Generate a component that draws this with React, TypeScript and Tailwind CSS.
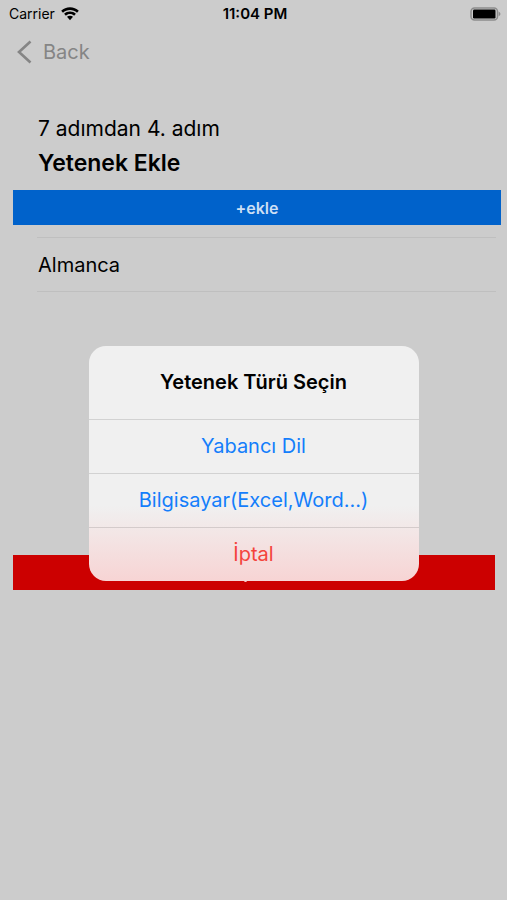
import React from 'react';

const options = [
  { label: 'Yabancı Dil', color: 'text-[#147efb]' },
  { label: 'Bilgisayar(Excel,Word...)', color: 'text-[#147efb]' },
  { label: 'İptal', color: 'text-[#f4443c]' },
];

const skills = ['Almanca'];

const StatusBar: React.FC = () => (
  <header className="grid grid-cols-3 items-center h-7 pl-[9px] pr-[6px]">
    <div className="flex items-center gap-[6px] text-sm">
      <span>Carrier</span>
      <svg className="w-[18px] h-[14px]" viewBox="0 0 18 14" aria-hidden="true">
        <path d="M9 0.2C5.6 0.2 2.500 1.500 0.200 3.700L2 5.700C3.900 3.900 6.300 2.900 9 2.900S14.100 3.900 16 5.700L17.800 3.700C15.500 1.500 12.400 0.200 9 0.200Z" />
        <path d="M9 4.400C6.800 4.400 4.700 5.200 3.100 6.700L4.900 8.700C6 7.700 7.400 7.100 9 7.100S12 7.700 13.100 8.700L14.900 6.700C13.300 5.200 11.200 4.400 9 4.400Z" />
        <path d="M9 8.700C7.800 8.700 6.800 9.100 6 9.800L9 13.200L12 9.800C11.200 9.100 10.200 8.700 9 8.700Z" />
      </svg>
    </div>
    <span className="text-center text-[15px] font-semibold">11:04 PM</span>
    <svg className="justify-self-end w-[31px] h-[14px]" viewBox="0 0 31 14" aria-hidden="true">
      <rect x="1" y="1" width="26.500" height="12" rx="3.500" fill="none" stroke="#8c8c8c" strokeWidth="1.500" />
      <rect x="3" y="2.600" width="22.500" height="8.800" rx="1.200" />
      <path d="M28.600 4.800C29.800 5.200 30.400 6 30.400 7S29.800 8.800 28.600 9.200Z" fill="#8c8c8c" />
    </svg>
  </header>
);

const App: React.FC = () => {
  return (
    <div className="relative min-h-screen bg-[#cccccc] text-black font-['Inter',sans-serif]">
      <StatusBar />

      <nav className="pl-4 pt-1">
        <button className="flex items-center gap-[11px] h-10 text-xl text-[#858585]">
          <svg className="w-4 h-6" viewBox="0 0 16 24" fill="none" stroke="currentColor" strokeWidth="2.600" aria-hidden="true">
            <path d="M14.500 1.500L3 12L14.500 22.500" />
          </svg>
          Back
        </button>
      </nav>

      <main className="pl-[13px] pt-11">
        <div className="pl-[25px]">
          <p className="text-[21px] leading-[26px]">7 adımdan 4. adım</p>
          <h1 className="pt-[5px] text-[23px] leading-8 font-semibold">Yetenek Ekle</h1>
        </div>

        <div className="pt-[11px] pr-[6px]">
          <button className="w-full h-[35px] bg-[#0062cb] text-base font-semibold text-[#ccdff4]">+ekle</button>
        </div>

        <ul className="mt-3 ml-6 mr-[11px] border-t border-[#bfbfbf]">
          {skills.map((skill) => (
            <li key={skill} className="flex items-center h-[54px] pl-px border-b border-[#bfbfbf] text-xl">
              {skill}
            </li>
          ))}
        </ul>

        <div className="pt-[263px] pr-3">
          <button aria-label="Kaydet" className="flex items-end justify-center w-full h-[35px] pb-2 pr-[18px] bg-[#cc0000]">
            <span className="size-[3px] rounded-full bg-[#f4cccc]" />
          </button>
        </div>
      </main>

      {/* Skill type dialog */}
      <div className="absolute inset-0 flex items-center justify-center pt-[26px]">
        <div
          role="dialog"
          aria-labelledby="skill-type-title"
          className="w-[330px] rounded-[17px] overflow-hidden text-center bg-linear-to-b from-[#f0f0f0] from-68% to-[#f7d4d4]"
        >
          <h2 id="skill-type-title" className="flex items-center justify-center h-[73px] text-xl font-semibold">
            Yetenek Türü Seçin
          </h2>
          {options.map((option) => (
            <button key={option.label} className={`block w-full h-[54px] border-t border-black/12 text-xl ${option.color}`}>
              {option.label}
            </button>
          ))}
        </div>
      </div>
    </div>
  );
};

export default App;
